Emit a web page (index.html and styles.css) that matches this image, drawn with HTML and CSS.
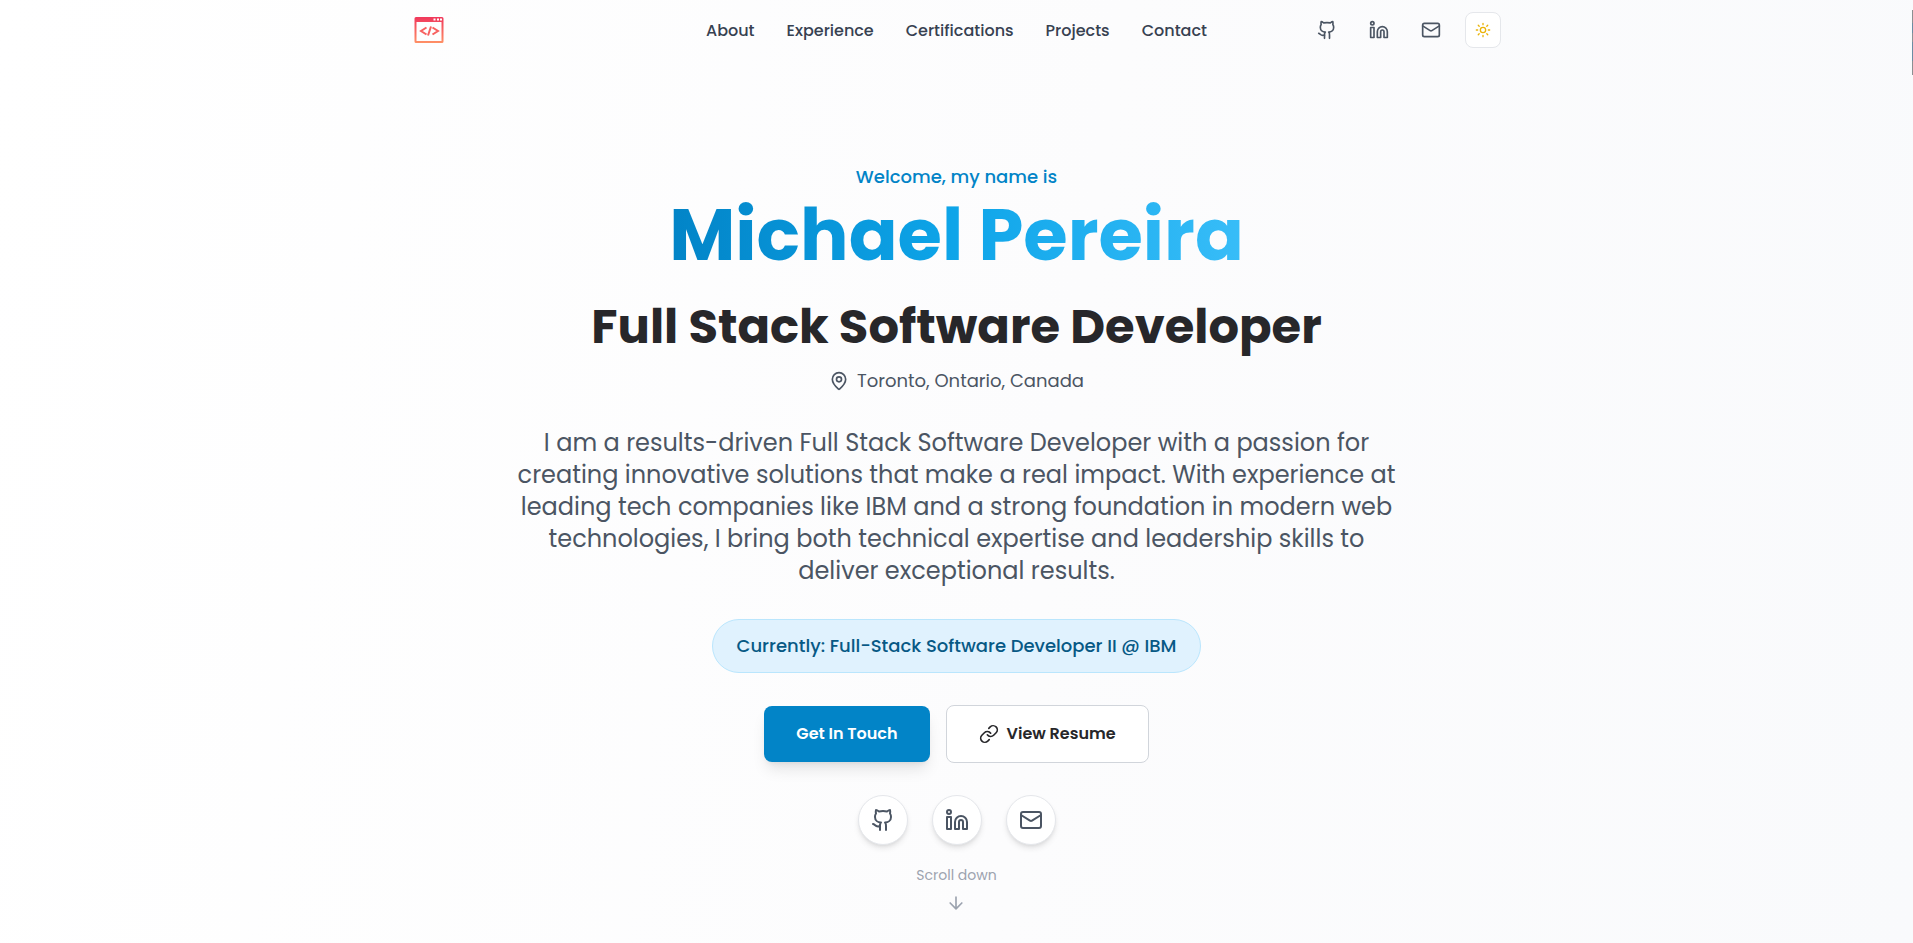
FILE: index.html
```html
<!DOCTYPE html>
<html lang="en">
<head>
<meta charset="utf-8">
<meta name="viewport" content="width=device-width, initial-scale=1">
<title>Michael Pereira</title>
<link rel="stylesheet" href="styles.css">
</head>
<body>
<svg class="sprite" aria-hidden="true">
  <symbol id="github" viewBox="0 0 24 24"><path d="M15 22v-4a4.8 4.8 0 0 0-1-3.5c3 0 6-2 6-5.5.08-1.25-.27-2.48-1-3.5.28-1.15.28-2.35 0-3.5 0 0-1 0-3 1.5-2.64-.5-5.36-.5-8 0C6 2 5 2 5 2c-.3 1.15-.3 2.35 0 3.5A5.4 5.4 0 0 0 4 9c0 3.5 3 5.5 6 5.5-.39.49-.68 1.05-.85 1.65-.17.6-.22 1.23-.15 1.85v4"/><path d="M9 18c-4.51 2-5-2-7-2"/></symbol>
  <symbol id="linkedin" viewBox="0 0 24 24"><path d="M16 8a6 6 0 0 1 6 6v7h-4v-7a2 2 0 0 0-4 0v7h-4v-7a6 6 0 0 1 6-6z"/><rect x="2" y="9" width="4" height="12"/><circle cx="4" cy="4" r="2"/></symbol>
  <symbol id="mail" viewBox="0 0 24 24"><rect x="2" y="4" width="20" height="16" rx="2"/><path d="m22 7-8.97 5.7a1.94 1.94 0 0 1-2.06 0L2 7"/></symbol>
</svg>

<header class="header">
  <div class="header-inner">
    <a class="logo" href="#top" aria-label="Home">
      <svg width="32" height="32" viewBox="0 0 32 32">
        <defs><linearGradient id="brand" x1="0" y1="0" x2="0" y2="1"><stop offset="0" stop-color="#f0385c"/><stop offset="1" stop-color="#ff9066"/></linearGradient></defs>
        <path fill="url(#brand)" fill-rule="evenodd" d="M3 3h26a1.500 1.500 0 0 1 1.500 1.500v23a1.500 1.500 0 0 1-1.500 1.500H3a1.500 1.500 0 0 1-1.500-1.500v-23A1.500 1.500 0 0 1 3 3zM3.500 8v19h25V8z"/>
        <path fill="#fff" d="M20.500 4.500h2v2h-2zM24 4.500h2v2h-2zM27 4.500h2v2h-2z"/>
        <path fill="none" stroke="#f7605f" stroke-width="2" d="m13.500 13.500-5.500 3.500 5.500 3.500M19.500 13.500l5.500 3.500-5.500 3.500M18 12.500l-3 9"/>
      </svg>
    </a>
    <nav class="nav" aria-label="Main">
      <a href="#about">About</a><a href="#experience">Experience</a><a href="#certifications">Certifications</a><a href="#projects">Projects</a><a href="#contact">Contact</a>
    </nav>
    <div class="tools">
      <a class="tool" href="#github" aria-label="GitHub"><svg class="icon small"><use href="#github"/></svg></a>
      <a class="tool" href="#linkedin" aria-label="LinkedIn"><svg class="icon small"><use href="#linkedin"/></svg></a>
      <a class="tool" href="#mail" aria-label="Email"><svg class="icon small"><use href="#mail"/></svg></a>
      <button class="tool theme" type="button" aria-label="Toggle theme"><svg class="icon tiny" viewBox="0 0 24 24"><circle cx="12" cy="12" r="4"/><path d="M12 2v2M12 20v2M4.900 4.900l1.400 1.400M17.700 17.700l1.400 1.400M2 12h2M20 12h2M6.300 17.700l-1.400 1.400M19.100 4.900l-1.400 1.400"/></svg></button>
    </div>
  </div>
</header>

<main class="hero" id="top">
  <p class="welcome">Welcome, my name is</p>
  <h1 class="name">Michael Pereira</h1>
  <h2 class="role">Full Stack Software Developer</h2>
  <p class="place"><svg class="icon small" viewBox="0 0 24 24"><path d="M20 10c0 5-5.540 10.190-7.400 11.800a1 1 0 0 1-1.200 0C9.540 20.190 4 15 4 10a8 8 0 0 1 16 0"/><circle cx="12" cy="10" r="3"/></svg>Toronto, Ontario, Canada</p>
  <p class="bio">I am a results-driven Full Stack Software Developer with a passion for creating innovative solutions that make a real impact. With experience at leading tech companies like IBM and a strong foundation in modern web technologies, I bring both technical expertise and leadership skills to deliver exceptional results.</p>
  <p class="current">Currently: Full-Stack Software Developer II @ IBM</p>
  <div class="actions">
    <a class="btn primary" href="#contact">Get In Touch</a>
    <a class="btn outline" href="#resume"><svg class="icon small" viewBox="0 0 24 24"><path d="M10 13a5 5 0 0 0 7.540.540l3-3a5 5 0 0 0-7.070-7.070l-1.720 1.710"/><path d="M14 11a5 5 0 0 0-7.540-.540l-3 3a5 5 0 0 0 7.070 7.070l1.710-1.710"/></svg>View Resume</a>
  </div>
  <div class="socials">
    <a class="social" href="#github" aria-label="GitHub"><svg class="icon"><use href="#github"/></svg></a>
    <a class="social" href="#linkedin" aria-label="LinkedIn"><svg class="icon"><use href="#linkedin"/></svg></a>
    <a class="social" href="#mail" aria-label="Email"><svg class="icon"><use href="#mail"/></svg></a>
  </div>
  <a class="scroll" href="#about">Scroll down<svg class="icon small" viewBox="0 0 24 24"><path d="M12 5v14M19 12l-7 7-7-7"/></svg></a>
</main>
<div class="scroll-thumb"></div>
</body>
</html>
```

FILE: styles.css
```css
* { box-sizing: border-box; }
body {
  margin: 0;
  min-height: 100vh;
  font-family: Poppins, Inter, sans-serif;
  font-size: 16px;
  line-height: 24px;
  color: #4b5563;
  background: linear-gradient(98deg, #ffffff, #fcfcfd 55%, #f9fafc);
}
h1, h2, p { margin: 0; }
a { color: inherit; text-decoration: none; }
.sprite { position: absolute; width: 0; height: 0; }
.icon {
  flex: none;
  width: 24px;
  height: 24px;
  fill: none;
  stroke: currentColor;
  stroke-width: 2;
  stroke-linecap: round;
  stroke-linejoin: round;
}
.icon.small { width: 20px; height: 20px; }
.icon.tiny { width: 16px; height: 16px; }

.header-inner {
  display: grid;
  grid-template-columns: 1fr auto 1fr;
  align-items: center;
  max-width: 1152px;
  height: 60px;
  margin: 0 auto;
  padding: 0 32px;
}
.logo, .logo svg { display: block; width: 32px; }
.nav { display: flex; gap: 32px; padding-top: 2px; font-weight: 500; color: #374151; }
.tools { display: flex; justify-content: flex-end; gap: 16px; }
.tool { display: flex; align-items: center; justify-content: center; width: 36px; height: 36px; }
.theme {
  padding: 0;
  color: #eab308;
  background: #ffffff;
  border: 1px solid #e5e7eb;
  border-radius: 8px;
}

.hero {
  display: flex;
  flex-direction: column;
  align-items: center;
  padding: 103px 32px 28px;
  text-align: center;
}
.welcome { font-size: 18px; line-height: 28px; font-weight: 500; color: #0284c7; }
.name {
  margin-top: 8px;
  font-size: 72px;
  line-height: 72px;
  font-weight: 700;
  color: transparent;
  background: linear-gradient(90deg, #0284c7, #0ea5e9 50%, #38bdf8);
  background-clip: text;
}
.role { margin-top: 32px; font-size: 48px; line-height: 48px; font-weight: 700; color: #27272a; }
.place { display: flex; align-items: center; gap: 8px; margin-top: 16px; font-size: 18px; line-height: 28px; }
.bio { max-width: 896px; margin-top: 32px; font-size: 24px; line-height: 32px; }
.current {
  margin-top: 32px;
  padding: 12px 24px;
  font-size: 18px;
  line-height: 28px;
  font-weight: 500;
  color: #075985;
  background: #e0f2fe;
  border: 1px solid #bae6fd;
  border-radius: 27px;
}
.actions { display: flex; align-items: center; gap: 16px; margin-top: 32px; }
.btn { display: flex; align-items: center; gap: 8px; padding: 16px 32px; border-radius: 8px; font-weight: 600; }
.primary { color: #ffffff; background: #0284c7; box-shadow: 0 10px 15px -3px rgba(0, 0, 0, 0.1), 0 4px 6px -4px rgba(0, 0, 0, 0.1); }
.outline { color: #27272a; background: #ffffff; border: 1px solid #d1d5db; }
.socials { display: flex; gap: 24px; margin-top: 32px; }
.social {
  display: flex;
  padding: 12px;
  background: #ffffff;
  border: 1px solid #e5e7eb;
  border-radius: 50%;
  box-shadow: 0 4px 6px -1px rgba(0, 0, 0, 0.1), 0 2px 4px -2px rgba(0, 0, 0, 0.1);
}
.scroll { display: flex; flex-direction: column; align-items: center; gap: 8px; margin-top: 20px; font-size: 14px; line-height: 20px; color: #9ca3af; }
.scroll-thumb {
  position: fixed;
  top: 10px;
  right: 0;
  width: 1px;
  height: 65px;
  background: linear-gradient(#8b8f92 20%, #6b8ca3 20% 36%, #8b9296 36% 50%, #6b8ca3 50% 78%, #8b8f92 78%);
}
```
